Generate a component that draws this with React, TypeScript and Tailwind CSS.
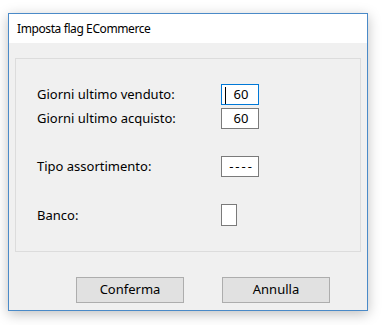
import React from "react";

const font = { fontFamily: '"Noto Sans", "Open Sans", sans-serif' };

function Row({ label, children, className = "" }: { label: string; children: React.ReactNode; className?: string }) {
  return (
    <div className={`flex items-center ${className}`}>
      <div className="w-[184px] text-[13px] leading-none text-black">{label}</div>
      {children}
    </div>
  );
}

export default function App() {
  return (
    <div className="w-[384px] h-[325px] bg-white pl-[8px] pt-[13px]" style={font}>
      <div className="w-[360px] h-[298px] border border-[#4a8ac8] bg-[#f0f0f0] shadow-[0_3px_12px_rgba(0,0,0,0.25)] flex flex-col">
        <div className="h-[29px] bg-white flex items-center pl-[8px] text-[12px] tracking-[-0.4px] text-black">
          Imposta flag ECommerce
        </div>
        <div className="flex-1 flex flex-col">
          <div className="mt-[15px] ml-[6px] w-[346px] h-[194px] border border-[#dcdcdc] pt-[25px] pl-[21px] flex flex-col">
            <Row label="Giorni ultimo venduto:">
              <div className="relative w-[38px] h-[21px] border border-[#0078d7] bg-white flex items-center justify-center text-[13px] pl-[2px]">
                <div className="absolute left-[3px] top-[2px] w-px h-[17px] bg-black" />
                60
              </div>
            </Row>
            <Row label="Giorni ultimo acquisto:" className="mt-[3px]">
              <div className="w-[38px] h-[21px] border border-[#7a7a7a] bg-white flex items-center justify-center text-[13px] pl-[2px]">
                60
              </div>
            </Row>
            <Row label="Tipo assortimento:" className="mt-[27px]">
              <div className="w-[38px] h-[21px] border border-[#7a7a7a] bg-white flex items-center justify-center text-[13px] tracking-[2px] pl-[3px]">
                ----
              </div>
            </Row>
            <Row label="Banco:" className="mt-[27px]">
              <div className="w-[16px] h-[22px] border border-[#7a7a7a] bg-white" />
            </Row>
          </div>
          <div className="mt-[25px] ml-[67px] flex gap-[38px]">
            <button className="w-[108px] h-[26px] border border-[#adadad] bg-[#e1e1e1] text-[13px] text-black flex items-center justify-center">
              Conferma
            </button>
            <button className="w-[108px] h-[26px] border border-[#adadad] bg-[#e1e1e1] text-[13px] text-black flex items-center justify-center">
              Annulla
            </button>
          </div>
        </div>
      </div>
    </div>
  );
}
